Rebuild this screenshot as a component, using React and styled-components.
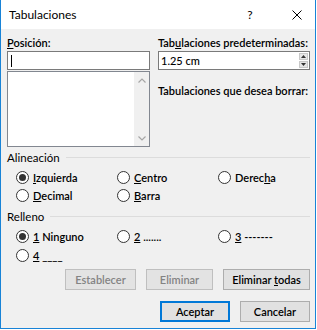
import styled, { createGlobalStyle } from 'styled-components'

const GlobalStyle = createGlobalStyle`
  body {
    margin: 0;
    background: #ffffff;
    font-family: Lato, "Noto Sans", sans-serif;
    font-size: 11px;
    color: #000;
  }
`

const Window = styled.div`
  width: 316px;
  height: 329px;
  box-sizing: border-box;
  border: 1px solid #1883d7;
  border-top: none;
  display: flex;
  flex-direction: column;
  background: #f0f0f0;
`

const TitleBar = styled.div`
  height: 29px;
  flex: none;
  background: #ffffff;
  display: flex;
  align-items: center;
  padding: 0 11px 0 8px;
`

const Title = styled.div`
  flex: 1;
  font-size: 12px;
`

const TitleButtons = styled.div`
  display: flex;
  align-items: center;
  gap: 33px;
`

const TitleButton = styled.div`
  width: 14px;
  height: 14px;
  display: flex;
  align-items: center;
  justify-content: center;
  font-size: 12px;
`

const Body = styled.div`
  flex: 1;
  display: flex;
  flex-direction: column;
  padding: 6px 5px 0 6px;
`

const TopGrid = styled.div`
  display: grid;
  grid-template-columns: 143px 1fr;
  column-gap: 8px;
`

const Column = styled.div`
  display: flex;
  flex-direction: column;
`

const FieldLabel = styled.div`
  font-weight: 600;
  line-height: 15px;
  margin-top: ${(p) => p.$gap || 0}px;
  margin-bottom: 1px;
  white-space: nowrap;
`

const TextBox = styled.div`
  position: relative;
  height: 19px;
  box-sizing: border-box;
  border: 1px solid #7a7a7a;
  background: #ffffff;
  display: flex;
  align-items: center;
  padding-left: 2px;
  font-weight: 500;
`

const Caret = styled.span`
  width: 1px;
  height: 12px;
  background: #000;
  margin-left: 1px;
`

const List = styled.div`
  margin-top: 1px;
  height: 76px;
  box-sizing: border-box;
  border: 1px solid #828790;
  background: #ffffff;
  display: flex;
  justify-content: flex-end;
`

const ScrollBar = styled.div`
  width: 15px;
  background: #f0f0f0;
  display: flex;
  flex-direction: column;
  justify-content: space-between;
  align-items: center;
  padding: 6px 0 5px;
`

const Spinner = styled.div`
  margin-left: auto;
  margin-right: 1px;
  width: 9px;
  height: 15px;
  display: flex;
  flex-direction: column;
  gap: 1px;
`

const SpinPart = styled.div`
  flex: 1;
  background: #e6e6e6;
  border: 1px solid #c8c8c8;
  display: flex;
  align-items: center;
  justify-content: center;
`

const GroupHeader = styled.div`
  display: flex;
  align-items: center;
  gap: 6px;
  line-height: 15px;
  font-size: 11.5px;
  margin-top: ${(p) => p.$gap}px;
  &::after {
    content: '';
    flex: 1;
    height: 1px;
    background: #dcdcdc;
  }
`

const RadioGrid = styled.div`
  display: grid;
  grid-template-columns: 101px 101px 1fr;
  grid-auto-rows: ${(p) => p.$row}px;
  padding-left: 9px;
  margin-top: ${(p) => p.$gap}px;
`

const RadioItem = styled.label`
  display: flex;
  align-items: center;
  gap: 4px;
  font-weight: 600;
  white-space: nowrap;
`

const RadioCircle = styled.span`
  width: 13px;
  height: 13px;
  box-sizing: border-box;
  border-radius: 50%;
  border: 1px solid #333333;
  background: #ffffff;
  display: flex;
  align-items: center;
  justify-content: center;
  &::after {
    content: '';
    width: 7px;
    height: 7px;
    border-radius: 50%;
    background: ${(p) => (p.$checked ? '#333333' : 'transparent')};
  }
`

const ButtonRow = styled.div`
  display: flex;
  justify-content: flex-end;
  gap: 10px;
  margin-top: ${(p) => p.$gap}px;
`

const Button = styled.div`
  width: ${(p) => p.$w}px;
  height: 21px;
  box-sizing: border-box;
  border: 1px solid ${(p) => (p.$primary ? '#0078d7' : p.$disabled ? '#bfbfbf' : '#adadad')};
  box-shadow: ${(p) => (p.$primary ? 'inset 0 0 0 1px #0078d7' : 'none')};
  background: ${(p) => (p.$disabled ? '#e3e3e3' : '#e1e1e1')};
  color: ${(p) => (p.$disabled ? '#838383' : '#000')};
  font-weight: 600;
  display: flex;
  align-items: center;
  justify-content: center;
  white-space: nowrap;
`

const U = styled.span`
  text-decoration: underline;
  text-underline-offset: 1px;
`

const Chevron = ({ down }) => (
  <svg width="8" height="5" viewBox="0 0 8 5">
    <path d={down ? 'M0.5 0.5 L4 4 L7.5 0.5' : 'M0.5 4.5 L4 1 L7.5 4.5'} fill="none" stroke="#a6a6a6" strokeWidth="1.2" />
  </svg>
)

const Tri = ({ down }) => (
  <svg width="5" height="3" viewBox="0 0 5 3">
    <path d={down ? 'M0 0 H5 L2.5 3 Z' : 'M0 3 H5 L2.5 0 Z'} fill="#333" />
  </svg>
)

const Radio = ({ checked, children }) => (
  <RadioItem>
    <RadioCircle $checked={checked} />
    <span>{children}</span>
  </RadioItem>
)

const App = () => {
  return (
    <>
      <GlobalStyle />
      <Window>
        <TitleBar>
          <Title>Tabulaciones</Title>
          <TitleButtons>
            <TitleButton>?</TitleButton>
            <TitleButton>
              <svg width="10" height="10" viewBox="0 0 10 10">
                <path d="M0.5 0.5 L9.5 9.5 M9.5 0.5 L0.5 9.5" stroke="#000" strokeWidth="1" />
              </svg>
            </TitleButton>
          </TitleButtons>
        </TitleBar>
        <Body>
          <TopGrid>
            <Column>
              <FieldLabel>
                <U>P</U>osición:
              </FieldLabel>
              <TextBox>
                <Caret />
              </TextBox>
              <List>
                <ScrollBar>
                  <Chevron />
                  <Chevron down />
                </ScrollBar>
              </List>
            </Column>
            <Column>
              <FieldLabel>
                Tab<U>u</U>laciones predeterminadas:
              </FieldLabel>
              <TextBox>
                <span>1.25 cm</span>
                <Spinner>
                  <SpinPart>
                    <Tri />
                  </SpinPart>
                  <SpinPart>
                    <Tri down />
                  </SpinPart>
                </Spinner>
              </TextBox>
              <FieldLabel $gap={13}>Tabulaciones que desea borrar:</FieldLabel>
            </Column>
          </TopGrid>

          <GroupHeader $gap={3}>Alineación</GroupHeader>
          <RadioGrid $row={18} $gap={3}>
            <Radio checked>
              <U>I</U>zquierda
            </Radio>
            <Radio>
              <U>C</U>entro
            </Radio>
            <Radio>
              Derec<U>h</U>a
            </Radio>
            <Radio>
              <U>D</U>ecimal
            </Radio>
            <Radio>
              <U>B</U>arra
            </Radio>
          </RadioGrid>

          <GroupHeader $gap={5}>Relleno</GroupHeader>
          <RadioGrid $row={19} $gap={3}>
            <Radio checked>
              <U>1</U> Ninguno
            </Radio>
            <Radio>
              <U>2</U> .......
            </Radio>
            <Radio>
              <U>3</U> -------
            </Radio>
            <Radio>
              <U>4</U> ____
            </Radio>
          </RadioGrid>

          <ButtonRow $gap={4}>
            <Button $w={71} $disabled>
              <span>Establecer</span>
            </Button>
            <Button $w={67} $disabled>
              <span>Eliminar</span>
            </Button>
            <Button $w={87}>
              <span>
                Eliminar <U>t</U>odas
              </span>
            </Button>
          </ButtonRow>
          <ButtonRow $gap={11}>
            <Button $w={70} $primary>
              <span>Aceptar</span>
            </Button>
            <Button $w={70}>
              <span>Cancelar</span>
            </Button>
          </ButtonRow>
        </Body>
      </Window>
    </>
  )
}

export default App
